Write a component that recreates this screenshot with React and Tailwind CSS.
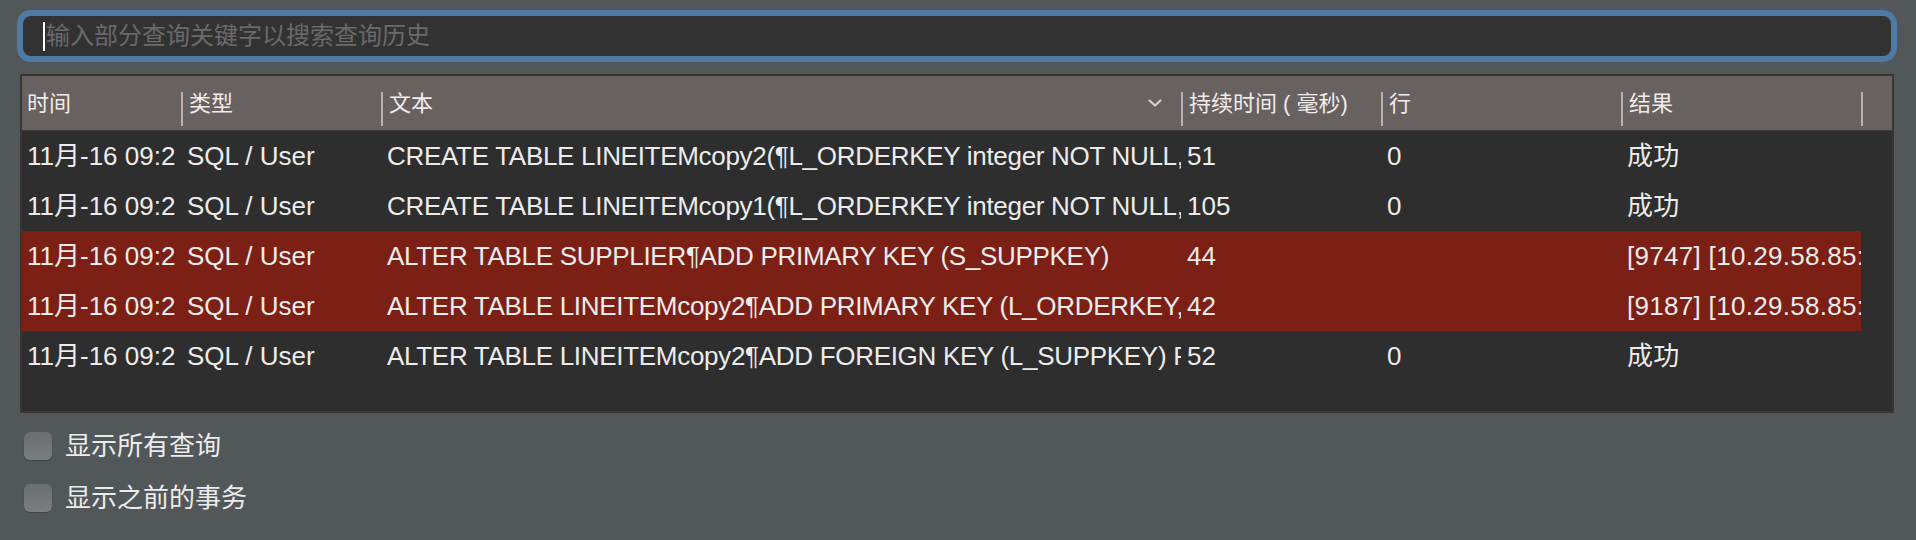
import React from "react";

const cols = [
  { key: "time", label: "时间", w: "w-[159px]", pl: "pl-[5px]" },
  { key: "type", label: "类型", w: "w-[200px]", pl: "pl-[6px]" },
  { key: "text", label: "文本", w: "w-[800px]", pl: "pl-[6px]", sort: true },
  { key: "dur", label: "持续时间 ( 毫秒)", w: "w-[200px]", pl: "pl-[6px]" },
  { key: "rows", label: "行", w: "w-[240px]", pl: "pl-[6px]" },
  { key: "result", label: "结果", w: "w-[240px]", pl: "pl-[6px]" },
];

const rows = [
  {
    time: "11月-16 09:2",
    type: "SQL / User",
    text: "CREATE TABLE LINEITEMcopy2(¶L_ORDERKEY integer NOT NULL,¶L_PARTKEY integer NOT NULL",
    dur: "51",
    rows: "0",
    result: "成功",
  },
  {
    time: "11月-16 09:2",
    type: "SQL / User",
    text: "CREATE TABLE LINEITEMcopy1(¶L_ORDERKEY integer NOT NULL,¶L_PARTKEY integer NOT NULL",
    dur: "105",
    rows: "0",
    result: "成功",
  },
  {
    time: "11月-16 09:2",
    type: "SQL / User",
    text: "ALTER TABLE SUPPLIER¶ADD PRIMARY KEY (S_SUPPKEY)",
    dur: "44",
    rows: "",
    result: "[9747] [10.29.58.85:5432] ERROR",
    error: true,
  },
  {
    time: "11月-16 09:2",
    type: "SQL / User",
    text: "ALTER TABLE LINEITEMcopy2¶ADD PRIMARY KEY (L_ORDERKEY, L_LINENUMBER)",
    dur: "42",
    rows: "",
    result: "[9187] [10.29.58.85:5432] ERROR",
    error: true,
  },
  {
    time: "11月-16 09:2",
    type: "SQL / User",
    text: "ALTER TABLE LINEITEMcopy2¶ADD FOREIGN KEY (L_SUPPKEY) REFERENCES SUPPLIER",
    dur: "52",
    rows: "0",
    result: "成功",
  },
];

const Divider = () => (
  <div className="self-end mb-[4px] w-[2px] h-[34px] bg-[#b9b3b1] shrink-0"></div>
);

const Chevron = () => (
  <svg width="14" height="8" viewBox="0 0 14 8" fill="none">
    <path d="M1.5 1.5 L7 6.5 L12.5 1.5" stroke="#d6d2d0" strokeWidth="2.2" strokeLinecap="round" strokeLinejoin="round" />
  </svg>
);

const Checkbox = ({ label }) => (
  <div className="flex items-center h-[28px]">
    <div className="w-[28px] h-[28px] rounded-[6px] bg-gradient-to-b from-[#6b6e70] to-[#7b7e80] shadow-[0_1px_1px_rgba(0,0,0,0.25)]"></div>
    <span className="ml-[13px] text-[26px] text-[#ececec]">{label}</span>
  </div>
);

export default function App() {
  return (
    <div className="w-[1916px] h-[540px] bg-[#52575a] pt-[10px] font-['Liberation_Sans','Noto_Sans_CJK_SC',sans-serif] overflow-hidden">
      {/* 搜索框 */}
      <div className="ml-[17px] w-[1880px] h-[52px] rounded-[14px] border-[6px] border-[#4e7aa5] bg-[#323232] flex items-center pl-[20px]">
        <span className="w-[2px] h-[29px] bg-white"></span>
        <span className="ml-[1px] text-[24px] text-[#6a6a6a] leading-none">输入部分查询关键字以搜索查询历史</span>
      </div>

      {/* 历史表格 */}
      <div className="mt-[12px] ml-[20px] w-[1874px] border-2 border-[#3a3535] bg-[#2e2e2e]">
        <div className="flex h-[55px] bg-[#676160] border-b border-[#3f3a3a] text-[22px] text-[#f1ecea]">
          {cols.map((c, i) => (
            <div key={c.key} className={`flex ${c.w} shrink-0`}>
              {i > 0 && <Divider />}
              <div className={`flex-1 flex items-center justify-between ${c.pl} ${c.sort ? "pr-[19px]" : ""}`}>
                <span className="whitespace-nowrap">{c.label}</span>
                {c.sort && <Chevron />}
              </div>
            </div>
          ))}
          <div className="flex flex-1">
            <Divider />
          </div>
        </div>

        <div className="h-[280px]">
          {rows.map((r, ri) => (
            <div key={ri} className={`flex w-[1839px] h-[50px] items-center text-[26px] text-[#ececec] ${r.error ? "bg-[#7c2016]" : ""}`}>
              <div className="w-[159px] pl-[5px] overflow-hidden whitespace-nowrap">{r.time}</div>
              <div className="w-[200px] pl-[6px] overflow-hidden whitespace-nowrap">{r.type}</div>
              <div className="w-[800px] pl-[6px] overflow-hidden whitespace-nowrap tracking-[-0.3px]">{r.text}</div>
              <div className="w-[200px] pl-[6px] overflow-hidden whitespace-nowrap">{r.dur}</div>
              <div className="w-[240px] pl-[6px] overflow-hidden whitespace-nowrap">{r.rows}</div>
              <div className="w-[240px] pl-[6px] overflow-hidden whitespace-nowrap tracking-[0.3px]">{r.result}</div>
            </div>
          ))}
        </div>
      </div>

      {/* 选项 */}
      <div className="mt-[19px] ml-[24px] flex flex-col gap-[24px]">
        <Checkbox label="显示所有查询" />
        <Checkbox label="显示之前的事务" />
      </div>
    </div>
  );
}
